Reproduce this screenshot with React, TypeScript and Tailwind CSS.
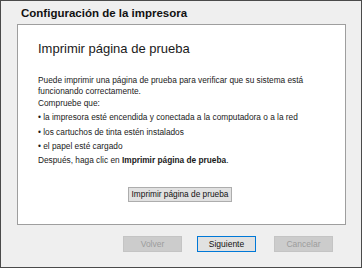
import React from "react";

export default function App() {
  return (
    <div className="w-[362px] h-[268px] bg-[#efefef] border border-[#4a4a4a] box-border flex flex-col text-[#1a1a1a]" style={{ fontFamily: '"Liberation Sans", Arial, sans-serif' }}>
      <div className="h-[23px] pl-[20px] pt-[5px] text-[11.5px] font-bold text-[#111] leading-[14px]">
        Configuración de la impresora
      </div>
      <div className="ml-[16px] w-[329px] h-[201px] bg-white border border-[#9e9e9e] flex flex-col pl-[20px]">
        <div className="mt-[15px] text-[13px] leading-[18px]">
          Imprimir página de prueba
        </div>
        <div className="mt-[17px] text-[8.3px] leading-[11px]">
          <div>Puede imprimir una página de prueba para verificar que su sistema está</div>
          <div>funcionando correctamente.</div>
          <div className="mt-[1px]">Compruebe que:</div>
          <div className="mt-[3px]">• la impresora esté encendida y conectada a la computadora o a la red</div>
          <div className="mt-[4px]">• los cartuchos de tinta estén instalados</div>
          <div className="mt-[3px]">• el papel esté cargado</div>
          <div className="mt-[3px]">Después, haga clic en <span className="font-bold">Imprimir página de prueba</span>.</div>
        </div>
        <div className="mt-[21px] flex pl-[90px]">
          <div className="w-[104px] h-[15px] bg-[#e1e1e1] border border-[#adadad] text-[8.3px] leading-[13px] text-center text-[#111]">
            Imprimir página de prueba
          </div>
        </div>
      </div>
      <div className="mt-[11px] flex pl-[122px] text-[8.5px]">
        <div className="w-[59px] h-[16px] bg-[#cccccc] border border-[#c4c4c4] text-[#9c9c9c] text-center leading-[14px]">Volver</div>
        <div className="ml-[15px] w-[59px] h-[16px] bg-[#e1e1e1] border border-[#0078d7] text-[#111] text-center leading-[14px]">Siguiente</div>
        <div className="ml-[18px] w-[59px] h-[16px] bg-[#cccccc] border border-[#c4c4c4] text-[#9c9c9c] text-center leading-[14px]">Cancelar</div>
      </div>
    </div>
  );
}
